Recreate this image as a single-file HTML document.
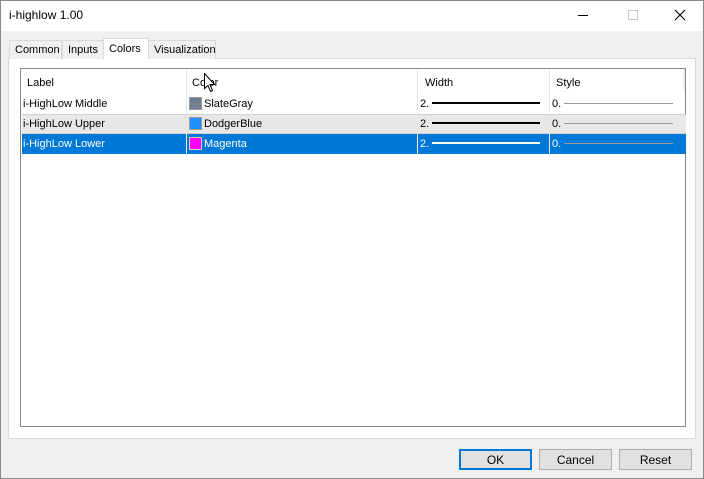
<!DOCTYPE html><html><head><style>
*{box-sizing:border-box;margin:0;padding:0}
body{width:704px;height:479px;background:#f0f0f0;font-family:"Liberation Sans",sans-serif;font-size:11px;color:#000;position:relative;overflow:hidden}
.abs{position:absolute}
.win{left:0;top:0;width:704px;height:479px;border:1px solid #8a8a8a}
.title{left:1px;top:1px;width:702px;height:30px;background:#fff}
.tab{position:absolute;top:40px;height:19px;border:1px solid #d9d9d9;border-bottom:none;background:#f0f0f0;padding:3px 0 0 5px;font-size:11px}
.panel{left:8px;top:58px;width:688px;height:381px;background:#fff;border:1px solid #d9d9d9}
.list{left:20px;top:68px;width:666px;height:359px;border:1px solid #828790;background:#fff}
.row{position:absolute;left:1px;width:664px;height:20px}
.cell{position:absolute;top:0;height:100%;padding:4px 0 0 1px;white-space:nowrap}
.sep{position:absolute;width:1px;background:#e5e5e5}
.sw{display:inline-block;width:13px;height:13px;vertical-align:-3px;margin-right:2px;border:1px solid #999}
.btn{position:absolute;top:449px;width:73px;height:21px;border:1px solid #adadad;background:#e1e1e1;text-align:center;padding-top:3px;font-size:12px}
</style></head><body>
<div class="abs win"></div>
<div class="abs title"></div>
<div class="abs" style="left:9px;top:8px;font-size:12px">i-highlow 1.00</div>
<div class="abs" style="left:578px;top:15px;width:10px;height:1px;background:#000"></div>
<div class="abs" style="left:628px;top:10px;width:10px;height:10px;border:1px solid #c8c8c8"></div>
<svg class="abs" style="left:674px;top:9px" width="12" height="12"><path d="M1 1L11 11M11 1L1 11" stroke="#000" stroke-width="1.1"/></svg>
<div class="abs panel"></div>
<div class="tab" style="left:9px;width:53px">Common</div>
<div class="tab" style="left:62px;width:42px">Inputs</div>
<div class="tab" style="left:148px;width:68px">Visualization</div>
<div class="tab" style="left:103px;top:38px;height:21px;width:46px;background:#fff;padding-top:4px;z-index:2">Colors</div>
<div class="abs list">
 <div class="row" style="top:1px;height:24px"><div class="cell" style="left:4px;padding-top:7px">Label</div><div class="cell" style="left:169px;padding-top:7px">Color</div><div class="cell" style="left:402px;padding-top:7px">Width</div><div class="cell" style="left:533px;padding-top:7px">Style</div></div>
 <div class="row" style="top:25px"><div class="cell" style="padding-top:4px">i-HighLow Middle</div><div class="cell" style="left:166px;padding-top:3px"><span class="sw" style="background:#708090"></span>SlateGray</div><div class="cell" style="left:397px">2. <span style="display:inline-block;width:108px;height:2px;background:#000;vertical-align:3px"></span></div><div class="cell" style="left:529px">0. <span style="display:inline-block;width:109px;height:1px;background:#999;vertical-align:3px"></span></div></div>
 <div class="row" style="top:45px;background:#e8e8e8;border-top:1px solid #d0d0d0;border-bottom:1px solid #d0d0d0"><div class="cell" style="padding-top:3px">i-HighLow Upper</div><div class="cell" style="left:166px;padding-top:2px"><span class="sw" style="background:#1e90ff"></span>DodgerBlue</div><div class="cell" style="left:397px;padding-top:3px">2. <span style="display:inline-block;width:108px;height:2px;background:#000;vertical-align:3px"></span></div><div class="cell" style="left:529px;padding-top:3px">0. <span style="display:inline-block;width:109px;height:1px;background:#999;vertical-align:3px"></span></div></div>
 <div class="row" style="top:65px;background:#0078d7;color:#fff"><div class="cell">i-HighLow Lower</div><div class="cell" style="left:166px;padding-top:3px"><span class="sw" style="background:#f0f;border-color:#ccc"></span>Magenta</div><div class="cell" style="left:397px">2. <span style="display:inline-block;width:108px;height:2px;background:#fff;vertical-align:3px"></span></div><div class="cell" style="left:529px">0. <span style="display:inline-block;width:109px;height:1px;background:#999;vertical-align:3px"></span></div></div>
 <div class="sep" style="left:165px;top:1px;height:84px"></div>
 <div class="sep" style="left:396px;top:1px;height:84px"></div>
 <div class="sep" style="left:528px;top:1px;height:84px"></div>
 <div class="sep" style="left:663px;top:1px;height:24px"></div>
</div>
<svg class="abs" style="left:204px;top:73px" width="13" height="20"><path d="M0.5 0.5L0.5 15.5L4 12.5L6.5 18.5L8.5 17.5L6 11.5L10.5 11.5Z" fill="#fff" stroke="#000" stroke-width="1"/></svg>
<div class="btn" style="left:459px;border:2px solid #0078d7;padding-top:2px">OK</div>
<div class="btn" style="left:539px">Cancel</div>
<div class="btn" style="left:619px">Reset</div>
</body></html>
